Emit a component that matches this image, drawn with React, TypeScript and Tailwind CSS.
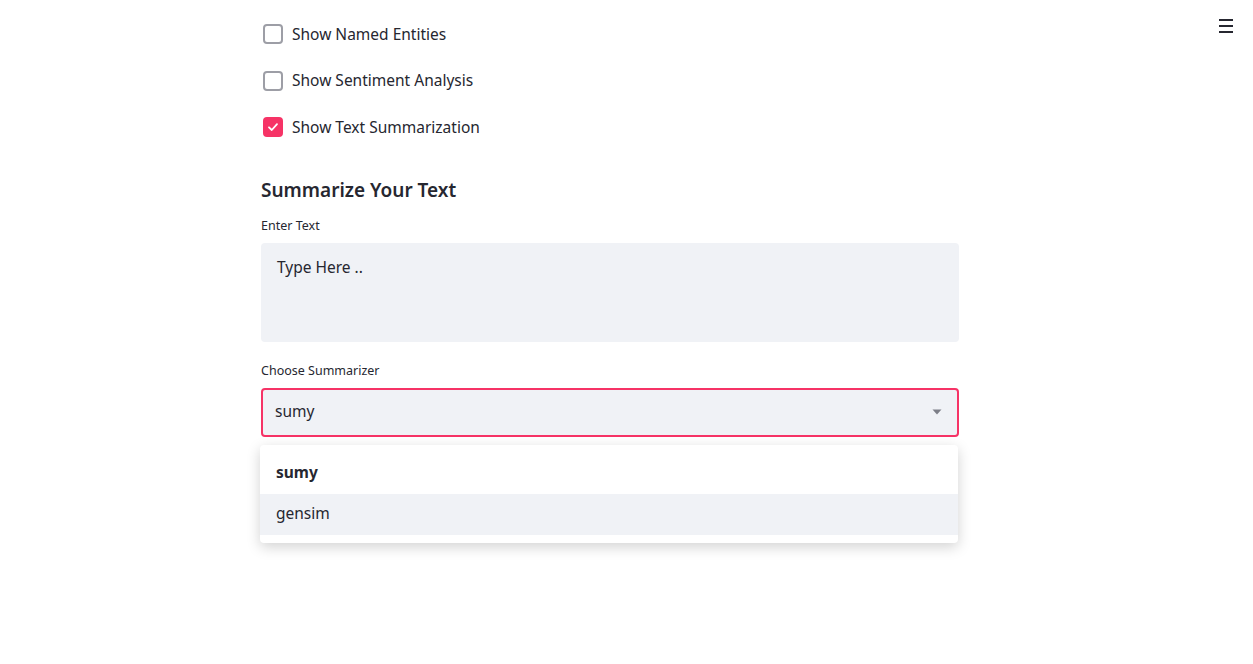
import React from "react";

const options = [
  { label: "Show Named Entities", checked: false },
  { label: "Show Sentiment Analysis", checked: false },
  { label: "Show Text Summarization", checked: true },
];

function Checkbox({ checked }: { checked: boolean }) {
  if (checked) {
    return (
      <span className="w-[20px] h-[20px] rounded-[4px] bg-[#f63366] flex items-center justify-center">
        <svg width="12" height="12" viewBox="0 0 12 12" fill="none">
          <path d="M2 6.3L4.8 9L10 3.2" stroke="white" strokeWidth="1.8" strokeLinecap="round" strokeLinejoin="round" />
        </svg>
      </span>
    );
  }
  return <span className="w-[20px] h-[20px] rounded-[4px] border-2 border-[#9d9ea6] bg-white" />;
}

export default function App() {
  return (
    <div className="relative min-h-[664px] bg-white text-[#262730]" style={{ fontFamily: '"Noto Sans", "Open Sans", sans-serif' }}>
      <button className="absolute right-[20px] top-[19px] flex flex-col gap-[4px] p-0">
        <span className="block w-[14px] h-[2px] bg-[#262730]" />
        <span className="block w-[14px] h-[2px] bg-[#262730]" />
        <span className="block w-[14px] h-[2px] bg-[#262730]" />
      </button>

      <div className="w-[698px] ml-[261px] pt-[11px]">
        <div className="flex flex-col">
          {options.map((o) => (
            <label key={o.label} className="h-[46.5px] flex items-center gap-[9px] pl-[2px]">
              <Checkbox checked={o.checked} />
              <span className="text-[15.5px] leading-none">{o.label}</span>
            </label>
          ))}
        </div>

        <h3 className="mt-[26px] text-[19px] font-semibold leading-[26px]">Summarize Your Text</h3>

        <div className="mt-[14px] text-[12.5px] leading-[18px]">Enter Text</div>
        <div className="mt-[8px] h-[99px] rounded-[4px] bg-[#f0f2f6] px-[16px] pt-[12px] text-[15.5px] leading-[24px]">
          Type Here ..
        </div>

        <div className="mt-[20px] text-[12.5px] leading-[18px]">Choose Summarizer</div>
        <div className="mt-[8px] h-[49px] rounded-[4px] border-2 border-[#f63366] bg-[#f0f2f6] flex items-center justify-between pl-[12px] pr-[15px]">
          <span className="text-[15.5px]">sumy</span>
          <svg width="10" height="6" viewBox="0 0 10 6">
            <path d="M0.5 0.5h9L5 5.5z" fill="#7d7f88" />
          </svg>
        </div>

        <div className="relative">
          <div className="absolute left-[-1px] top-[8px] w-[698px] rounded-[4px] bg-white shadow-[0_4px_14px_rgba(0,0,0,0.18)] pt-[8px] pb-[8px]">
            <div className="h-[41px] flex items-center px-[16px] text-[15.5px] font-bold">sumy</div>
            <div className="h-[41px] flex items-center px-[16px] text-[15.5px] bg-[#f0f2f6]">gensim</div>
          </div>
        </div>
      </div>
    </div>
  );
}
